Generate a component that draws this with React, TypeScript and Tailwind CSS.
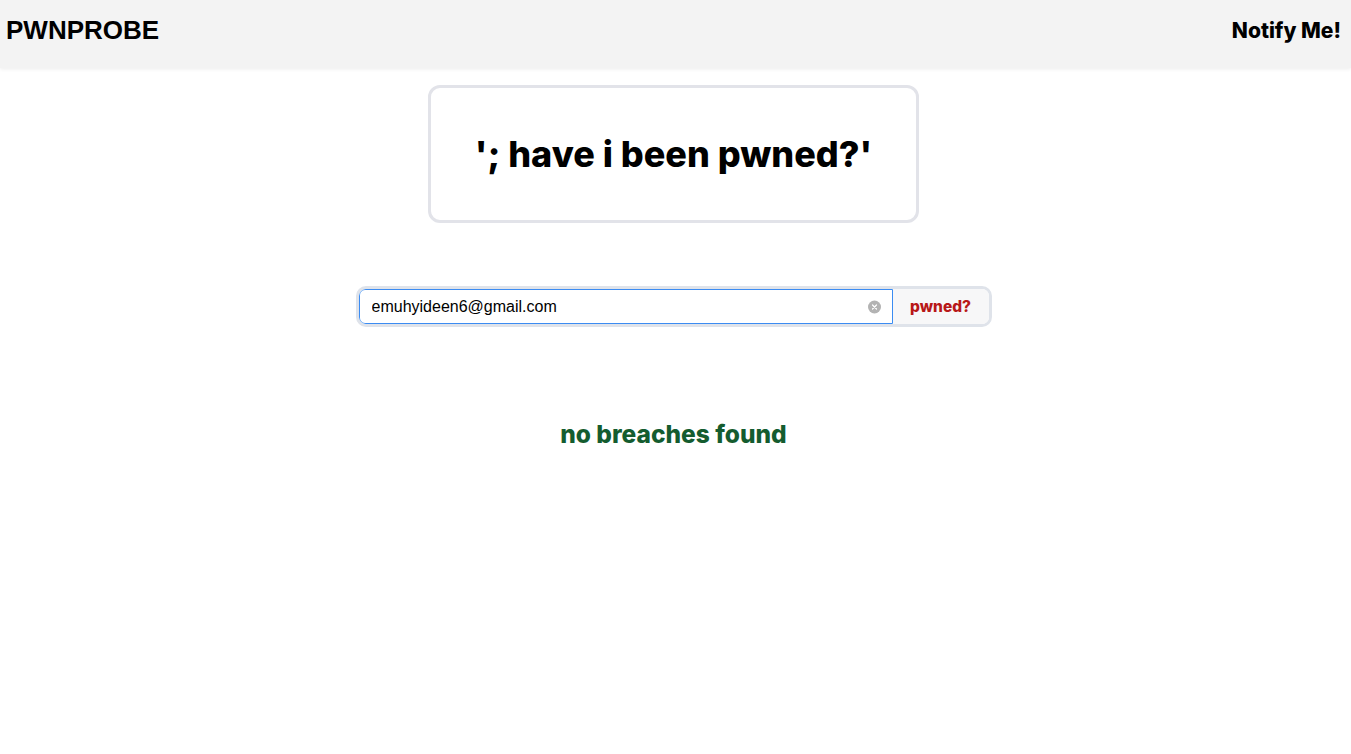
import React from "react";

export default function App() {
  return (
    <div className="min-h-screen bg-white" style={{ fontFamily: "Inter, 'Liberation Sans', sans-serif" }}>
      <header className="h-[68px] bg-[#f3f3f3] shadow-[0_1px_4px_rgba(0,0,0,0.08)] flex items-center justify-between pl-[6px] pr-[10px]">
        <div className="text-[26px] font-bold text-black font-['Liberation_Sans',Arial,sans-serif] -mt-[8px]">PWNPROBE</div>
        <div className="text-[21px] font-extrabold text-black -mt-[6px]">Notify Me!</div>
      </header>
      <main className="flex flex-col items-center">
        <div className="mt-[17px] mr-[4px] w-[491px] h-[138px] border-[3px] border-[#e2e3e9] rounded-[12px] flex items-center justify-center">
          <h1 className="text-[36px] font-extrabold text-black">'; have i been pwned?'</h1>
        </div>
        <div className="mt-[63px] mr-[4px] w-[636px] h-[41px] border-[3px] border-[#dfe3ea] rounded-[10px] flex overflow-hidden">
          <div className="relative flex-1 border border-[#3b8cf2] rounded-l-[6px] bg-white">
            <input
              type="text"
              readOnly
              value="emuhyideen6@gmail.com"
              className="w-full h-full border-0 pl-[12px] pr-[30px] text-[16px] text-black outline-none font-['Liberation_Sans',Arial,sans-serif] bg-transparent"
            />
            <span className="absolute right-[11px] top-1/2 -translate-y-1/2 w-[13px] h-[13px] rounded-full bg-[#b3b3b3] flex items-center justify-center">
              <svg width="7" height="7" viewBox="0 0 7 7">
                <path d="M1.5 1.5 L5.5 5.5 M5.5 1.5 L1.5 5.5" stroke="white" strokeWidth="1.2" strokeLinecap="round" />
              </svg>
            </span>
          </div>
          <button className="w-[96px] h-full bg-[#f7f7f8] text-[#b81818] text-[15.5px] font-extrabold flex items-center justify-center">
            pwned?
          </button>
        </div>
        <div className="mt-[89px] mr-[4px] text-[24.5px] font-extrabold text-[#145c2f]">no breaches found</div>
      </main>
    </div>
  );
}
